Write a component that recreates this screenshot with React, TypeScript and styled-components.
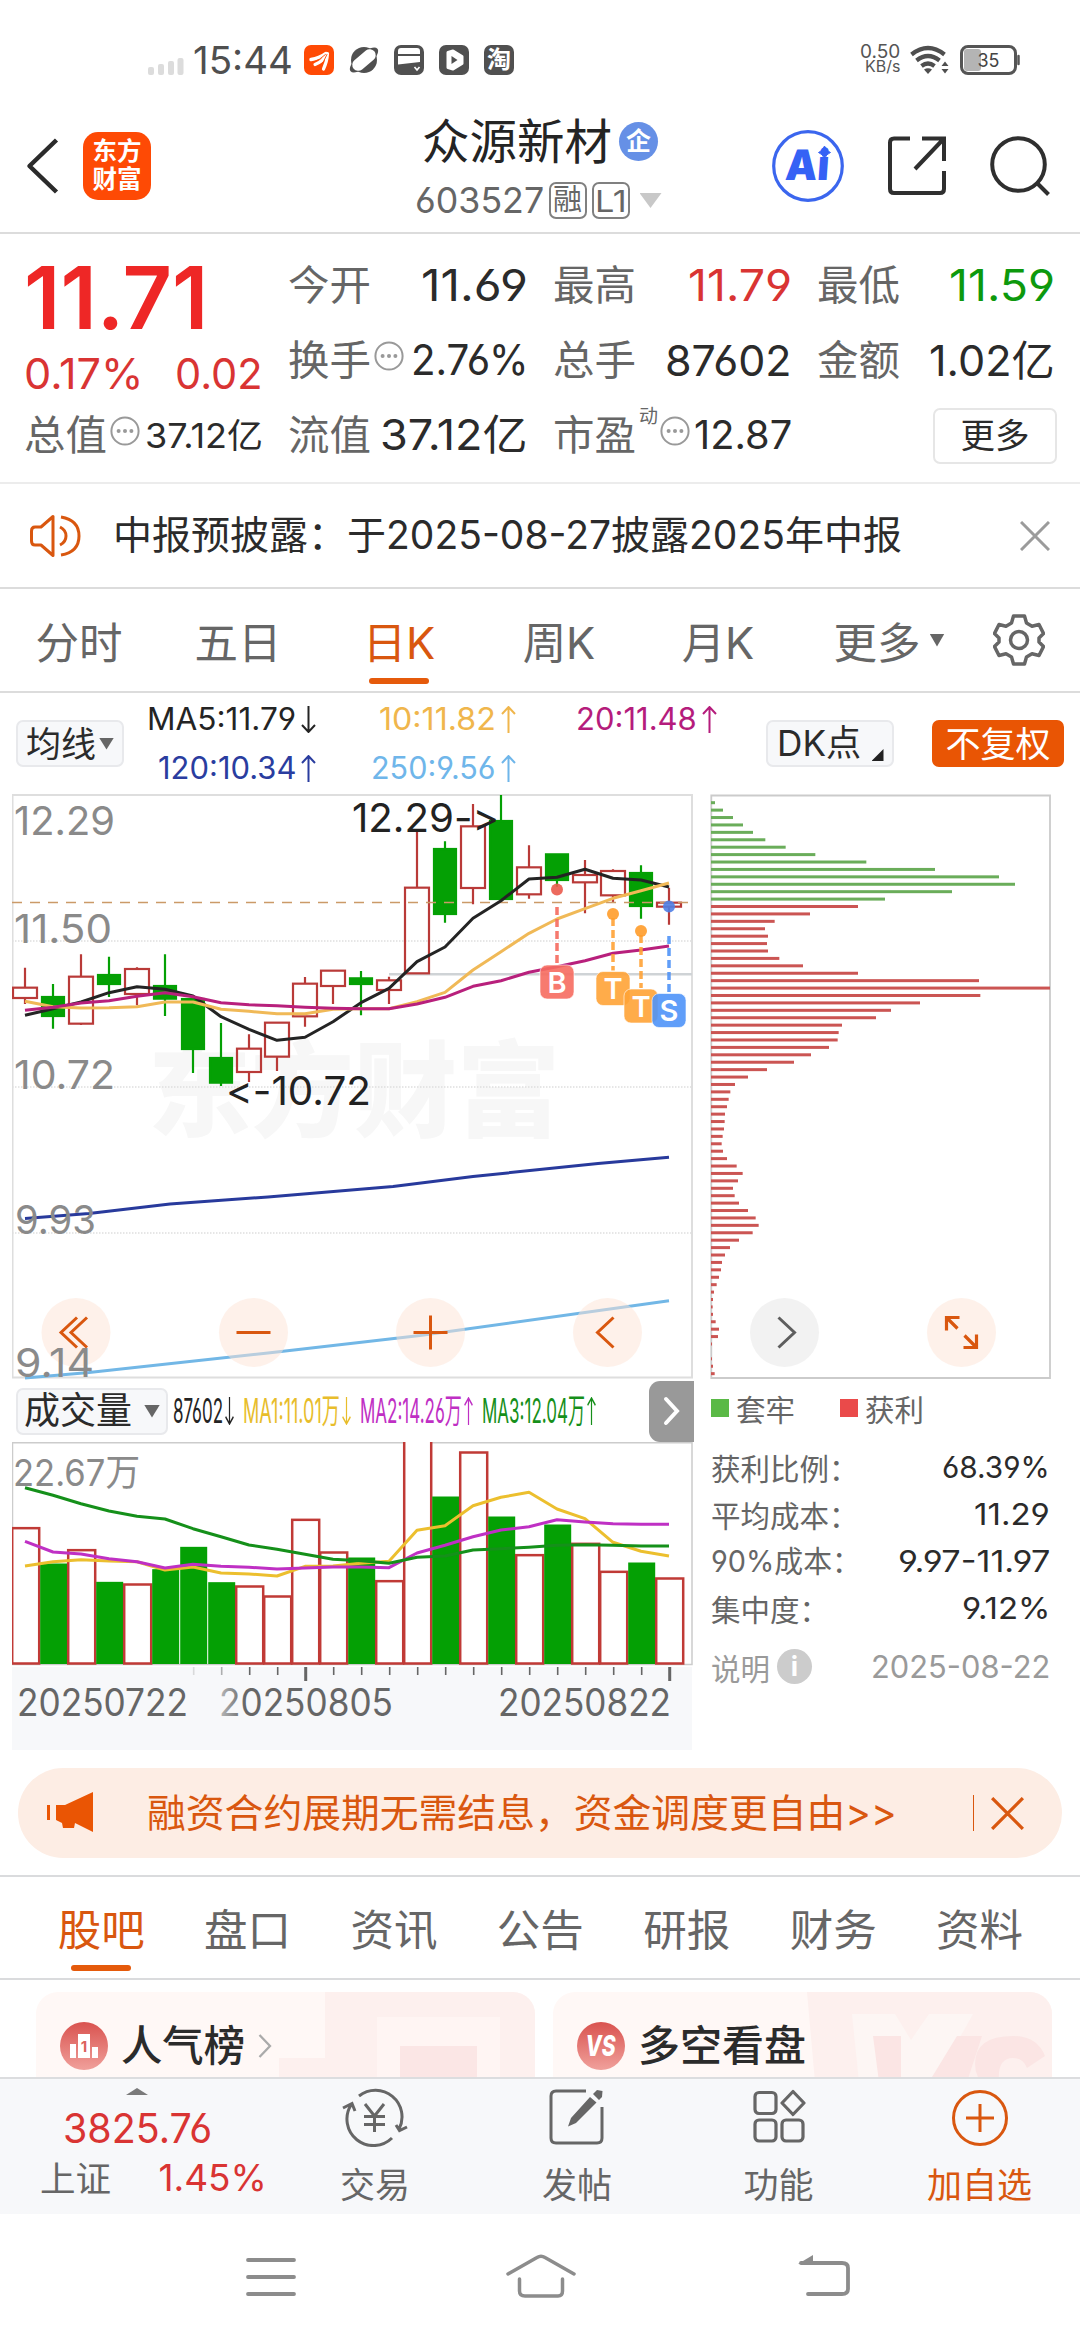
import React, { useLayoutEffect, useRef, useState } from 'react';
import styled, { createGlobalStyle } from 'styled-components';

const ORANGE = '#d9570f';
const RED = '#d93433';
const INK = '#2b2b2b';
const GRAY = '#666666';
const FONT = `'Inter', 'Noto Sans CJK SC', sans-serif`;

const Global = createGlobalStyle`
  * { box-sizing: border-box; }
  body { margin: 0; background: #fff; font-family: ${FONT}; color: ${INK}; }
  svg { display: block; flex: none; }
  svg text { font-family: ${FONT}; }
`;

/* ---------- text fitted to a fixed width ---------- */
const FitBox = styled.span<{ $w: number; $size: number; $color?: string; $weight?: number }>`
  display: inline-block;
  flex: none;
  width: ${p => p.$w}px;
  font-size: ${p => p.$size}px;
  line-height: 1.2;
  font-weight: ${p => p.$weight ?? 400};
  color: ${p => p.$color ?? 'inherit'};
  font-feature-settings: 'cv03', 'cv04';
`;
const FitInner = styled.span`
  display: inline-block;
  white-space: pre;
  transform-origin: 0 50%;
`;
type FitProps = { w: number; size: number; color?: string; weight?: number; children: React.ReactNode };
function Fit({ w, size, color, weight, children }: FitProps) {
  const ref = useRef<HTMLSpanElement>(null);
  const [scale, setScale] = useState(1);
  useLayoutEffect(() => {
    if (ref.current && ref.current.offsetWidth) setScale(w / ref.current.offsetWidth);
  }, [w, size, children]);
  return (
    <FitBox $w={w} $size={size} $color={color} $weight={weight}>
      <FitInner ref={ref} style={{ transform: `scaleX(${scale})` }}>{children}</FitInner>
    </FitBox>
  );
}

const Page = styled.div`
  width: 1080px;
  height: 2340px;
  display: flex;
  flex-direction: column;
  overflow: hidden;
  background: #fff;
`;

/* ---------- status bar ---------- */
const StatusBar = styled.div`
  height: 90px;
  flex: none;
  padding: 30px 60px 0 148px;
  display: flex;
  justify-content: space-between;
`;
const StatusGroup = styled.div<{ $gap: number }>`
  height: 60px;
  display: flex;
  align-items: center;
  gap: ${p => p.$gap}px;
`;
const Clock = styled.div`
  margin: 0 -4px 0 -8px;
  color: #4f4f4f;
`;
const AppTile = styled.div<{ $bg: string }>`
  width: 30px;
  height: 30px;
  border-radius: 7px;
  background: ${p => p.$bg};
  color: #fff;
  font-size: 24px;
  font-weight: 700;
  line-height: 30px;
  display: flex;
  align-items: center;
  justify-content: center;
`;
const Speed = styled.div`
  display: flex;
  flex-direction: column;
  align-items: flex-end;
  line-height: 1;
  margin-right: 0;
`;
const SpeedLine = styled.div`
  height: 15px;
  display: flex;
  align-items: center;
`;

/* ---------- header ---------- */
const Header = styled.header`
  height: 144px;
  flex: none;
  display: grid;
  grid-template-columns: 1fr auto 1fr;
  padding: 0 30px 0 26px;
  border-bottom: 2px solid #dcdcdc;
`;
const HeaderSide = styled.div<{ $end?: boolean }>`
  display: flex;
  align-items: center;
  height: 152px;
  justify-content: ${p => (p.$end ? 'flex-end' : 'flex-start')};
  gap: ${p => (p.$end ? 43 : 24)}px;
`;
const Logo = styled.div`
  width: 68px;
  height: 68px;
  border-radius: 15px;
  background: #fe4a05;
  color: #fff;
  font-size: 24.5px;
  font-weight: 700;
  line-height: 28px;
  text-align: center;
  padding-top: 5px;
`;
const TitleBlock = styled.div`
  display: flex;
  flex-direction: column;
  align-items: center;
  padding-top: 22px;
`;
const TitleLine = styled.div`
  height: 59px;
  display: flex;
  align-items: center;
  gap: 7px;
  padding-left: 4px;
`;
const Seal = styled.div`
  width: 39px;
  height: 39px;
  border-radius: 50%;
  background: #6690e6;
  color: #fff;
  font-size: 25px;
  font-weight: 700;
  line-height: 38px;
  text-align: center;
`;
const CodeLine = styled.div`
  height: 59px;
  display: flex;
  align-items: center;
  gap: 5px;
  color: ${GRAY};
`;
const CodeTag = styled.div`
  width: 38px;
  height: 37px;
  border: 2px solid #808080;
  border-radius: 7px;
  display: flex;
  align-items: center;
  justify-content: center;
`;
const Caret = styled.i<{ $w: number; $h: number; $c: string; $up?: boolean; $ml?: number }>`
  width: ${p => p.$w}px;
  height: ${p => p.$h}px;
  margin-left: ${p => p.$ml ?? 0}px;
  flex: none;
  background: ${p => p.$c};
  clip-path: ${p => (p.$up ? 'polygon(50% 0, 100% 100%, 0 100%)' : 'polygon(0 0, 100% 0, 50% 100%)')};
`;

/* ---------- quote ---------- */
const Quote = styled.section`
  height: 250px;
  flex: none;
  display: grid;
  grid-template-columns: 239px 240px 239px 238px;
  column-gap: 25px;
  padding: 14px 0 0 24px;
  border-bottom: 2px solid #ececec;
`;
const QuoteCol = styled.div`
  display: flex;
  flex-direction: column;
`;
const Cell = styled.div<{ $h?: number; $end?: boolean }>`
  height: ${p => p.$h ?? 75}px;
  display: flex;
  align-items: center;
  justify-content: ${p => (p.$end ? 'flex-end' : 'space-between')};
`;
const Label = styled.span<{ $dim?: boolean }>`
  display: flex;
  align-items: center;
  gap: 3px;
  color: ${p => (p.$dim ? '#9a9a9a' : GRAY)};
`;
const DotsIcon = styled.svg`
  margin-bottom: 9px;
`;
const Sup = styled.span`
  font-size: 19px;
  color: ${GRAY};
  align-self: flex-start;
  margin: -10px -1px 0 0;
`;
const MoreButton = styled.button`
  width: 124px;
  height: 56px;
  margin-right: -2px;
  padding: 0;
  background: #fff;
  border: 2px solid #e6e6e6;
  border-radius: 7px;
  color: ${INK};
  font: 400 34.5px/48px ${FONT};
`;

/* ---------- notice ---------- */
const Notice = styled.section`
  height: 105px;
  flex: none;
  display: flex;
  align-items: center;
  padding: 0 30px;
  border-bottom: 2px solid #dcdcdc;
`;
const NoticeText = styled.div`
  flex: 1;
  padding-left: 31px;
`;

/* ---------- tabs ---------- */
const PeriodTabs = styled.nav`
  height: 104px;
  flex: none;
  display: grid;
  grid-template-columns: 158px 160px 162px 158px 160px 182px 78px;
  border-bottom: 2px solid #dcdcdc;
`;
const Tab = styled.div<{ $on?: boolean }>`
  position: relative;
  display: flex;
  align-items: center;
  justify-content: center;
  gap: 9px;
  font-size: 43.5px;
  white-space: nowrap;
  color: ${p => (p.$on ? ORANGE : GRAY)};
  &::after {
    content: '';
    display: ${p => (p.$on ? 'block' : 'none')};
    position: absolute;
    bottom: 7px;
    left: calc(50% - 30px);
    width: 60px;
    height: 6px;
    border-radius: 3px;
    background: #e55a0b;
  }
`;

/* ---------- indicator strip ---------- */
const Indicators = styled.div`
  height: 101px;
  flex: none;
  display: flex;
  align-items: center;
  padding: 0 16px;
`;
const ChipButton = styled.div<{ $w: number; $solid?: boolean; $push?: boolean }>`
  width: ${p => p.$w}px;
  height: 47px;
  flex: none;
  margin-left: ${p => (p.$push ? 'auto' : '0')};
  border-radius: 7px;
  border: 2px solid ${p => (p.$solid ? '#e95504' : '#e8e9ec')};
  background: ${p => (p.$solid ? '#e95504' : '#f7f8fa')};
  color: ${p => (p.$solid ? '#fff' : INK)};
  display: flex;
  align-items: center;
  justify-content: center;
  gap: 3px;
  font-size: 35px;
  line-height: 40px;
  white-space: nowrap;
`;
const MaGrid = styled.div`
  display: grid;
  grid-template-columns: 192px 200px 201px;
  grid-auto-rows: 49px;
  margin-right: 49px;
  padding-top: 1px;
`;
const MaItem = styled.div<{ $c: string }>`
  display: flex;
  align-items: center;
  justify-content: flex-end;
  gap: 5px;
  color: ${p => p.$c};
`;
const Corner = styled.i`
  width: 12px;
  height: 12px;
  background: #222;
  clip-path: polygon(100% 0, 100% 100%, 0 100%);
  align-self: flex-end;
  margin: 0 0 4px 8px;
`;

/* ---------- charts ---------- */
const ChartArea = styled.section`
  flex: none;
  height: 974px;
  display: grid;
  grid-template-columns: 682px 345px;
  column-gap: 16px;
  padding-left: 12px;
`;
const Column = styled.div`
  display: flex;
  flex-direction: column;
`;
const VolumeHead = styled.div`
  height: 62px;
  display: flex;
  align-items: center;
  padding-left: 4px;
`;
const VolumeLegend = styled.div`
  flex: 1;
  display: flex;
  align-items: center;
  padding-left: 5px;
`;
const VolItem = styled.div<{ $c: string; $gap: number }>`
  display: flex;
  align-items: center;
  gap: 2px;
  color: ${p => p.$c};
  margin-right: ${p => p.$gap}px;
`;
const Expand = styled.div`
  width: 45px;
  height: 61px;
  border-radius: 11px 0 0 11px;
  background: #999;
  display: flex;
  align-items: center;
  justify-content: center;
`;
const CostLegend = styled.div`
  height: 59px;
  padding-bottom: 3px;
  display: flex;
  align-items: center;
  font-size: 29.5px;
  color: ${GRAY};
`;
const Swatch = styled.i<{ $c: string; $ml?: number }>`
  width: 18px;
  height: 18px;
  background: ${p => p.$c};
  margin: 0 7px 0 ${p => p.$ml ?? 0}px;
`;
const CostRow = styled.div<{ $mt?: number; $dim?: boolean }>`
  height: 47px;
  margin-top: ${p => p.$mt ?? 0}px;
  width: 340px;
  padding-left: 1px;
  display: flex;
  align-items: center;
  justify-content: space-between;
  font-size: 29.5px;
  color: ${p => (p.$dim ? '#9a9a9a' : GRAY)};
`;
const InfoDot = styled.span`
  width: 35px;
  height: 35px;
  border-radius: 50%;
  background: #cccccc;
  color: #fff;
  font-size: 27px;
  font-weight: 700;
  line-height: 35px;
  text-align: center;
  margin-left: 4px;
`;

/* ---------- banner ---------- */
const Banner = styled.section`
  flex: none;
  height: 90px;
  margin: 0 18px 17px;
  border-radius: 45px;
  background: #fdede4;
  display: flex;
  align-items: center;
  padding: 0 38px 0 28px;
  color: ${ORANGE};
`;
const BannerText = styled.div`
  flex: 1;
  padding-left: 53px;
`;
const Divider = styled.i`
  width: 1.5px;
  height: 36px;
  background: ${ORANGE};
  margin-right: 17px;
`;

const SectionTabs = styled.nav`
  height: 105px;
  flex: none;
  display: grid;
  grid-template-columns: repeat(7, 146.4px);
  padding-left: 28px;
  border-top: 2px solid #dadbdd;
  border-bottom: 2px solid #dadbdd;
`;
const Cards = styled.section`
  height: 97px;
  flex: none;
  padding: 12px 28px 0 36px;
  display: grid;
  grid-template-columns: 499px 499px;
  column-gap: 18px;
  overflow: hidden;
`;
const Card = styled.div`
  position: relative;
  height: 160px;
  border-radius: 22px;
  overflow: hidden;
  background: #fff8f6;
`;
const CardArt = styled.svg`
  position: absolute;
  top: 0;
  right: 0;
`;
const CardTitle = styled.div`
  position: relative;
  height: 108px;
  display: flex;
  align-items: center;
  gap: 13px;
  padding-left: 24px;
  font-size: 41.5px;
  font-weight: 500;
`;

/* ---------- bottom ---------- */
const BottomBar = styled.footer`
  height: 137px;
  flex: none;
  display: grid;
  grid-template-columns: 274px 202px 202px 201px 201px;
  background: #f7f8fa;
  border-top: 2px solid #dcdddf;
`;
const IndexBox = styled.div`
  display: flex;
  flex-direction: column;
  align-items: center;
  padding-top: 9px;
`;
const IndexValue = styled.div`
  height: 49px;
  margin-top: 9px;
  display: flex;
  align-items: center;
`;
const IndexLine = styled.div`
  height: 49px;
  display: flex;
  align-items: center;
  justify-content: space-between;
  width: 227px;
  margin-left: 32px;
  padding-top: 2px;
  color: ${GRAY};
`;
const Action = styled.div<{ $on?: boolean }>`
  display: flex;
  flex-direction: column;
  align-items: center;
  padding-top: 8px;
  gap: 12px;
  font-size: 35px;
  line-height: 52px;
  color: ${p => (p.$on ? ORANGE : GRAY)};
`;
const SystemNav = styled.div`
  flex: 1;
  display: grid;
  grid-template-columns: 276px 264px 302px;
  padding-left: 133px;
`;
const NavCell = styled.div`
  display: flex;
  justify-content: center;
  padding-top: 38px;
`;

/* ---------- small drawings ---------- */
const Dots = () => (
  <DotsIcon width="30" height="30" viewBox="0 0 30 30">
    <circle cx="15" cy="15" r="13.6" fill="none" stroke="#999" strokeWidth="2" />
    <g fill="#999"><circle cx="8.6" cy="15" r="2" /><circle cx="15" cy="15" r="2" /><circle cx="21.4" cy="15" r="2" /></g>
  </DotsIcon>
);
const Arrow = ({ down, w = 15, h = 27 }: { down?: boolean; w?: number; h?: number }) => (
  <svg width={w} height={h} viewBox="0 0 15 27" preserveAspectRatio="none">
    <path d={down ? 'M7.5 0V26M1 19l6.500 7 6.500-7' : 'M7.500 27V1M1 8l6.500-7L14 8'} fill="none" stroke="currentColor" strokeWidth="2" />
  </svg>
);
const Cross = ({ s, c, sw }: { s: number; c: string; sw: number }) => (
  <svg width={s} height={s} viewBox="0 0 30 30">
    <path d="M1 1L29 29M29 1L1 29" stroke={c} strokeWidth={sw} />
  </svg>
);

/* ---------- chart data ---------- */
const X = (i: number) => 25 + 28 * i;
const K = (v: number) => 780 + v / 3;
const V = (v: number) => 1420 + v / 3;

// up?, high, top, bottom, low
const candles: [number, number, number, number, number][] = [
  [1, 563, 623, 654, 672], [0, 612, 651, 708, 746], [1, 523, 590, 731, 735], [0, 530, 585, 612, 651],
  [1, 562, 567, 642, 676], [0, 523, 618, 656, 708], [0, 645, 657, 807, 879], [0, 729, 834, 908, 918],
  [1, 763, 806, 876, 906], [1, 728, 728, 830, 873], [1, 591, 611, 709, 740], [1, 572, 572, 618, 672],
  [0, 573, 595, 612, 706], [1, 590, 601, 630, 672], [1, 155, 323, 580, 580], [0, 184, 207, 402, 428],
  [1, 72, 139, 324, 373], [0, 45, 123, 357, 357], [1, 196, 262, 343, 356], [0, 222, 223, 300, 320],
  [1, 240, 285, 307, 400], [1, 268, 273, 346, 366], [0, 256, 279, 378, 416], [1, 323, 368, 380, 434],
];
const ma5 = [706, 686, 666, 638, 620, 628, 648, 710, 748, 781, 772, 725, 668, 625, 545, 501, 415, 362, 297, 292, 268, 295, 300, 321];
const ma10 = [664, 680, 684, 683, 680, 666, 666, 688, 694, 701, 701, 688, 686, 686, 665, 637, 570, 515, 460, 417, 386, 355, 332, 309];
const ma20 = [691, 682, 669, 662, 649, 638, 650, 668, 674, 677, 682, 685, 686, 686, 672, 652, 619, 602, 577, 560, 542, 520, 510, 498];
const volumes: [number, number][] = [
  [1, 323], [0, 432], [1, 389], [0, 487], [1, 492], [0, 449], [0, 382], [0, 488], [1, 498], [1, 528], [1, 298], [1, 396],
  [0, 414], [1, 482], [1, 60], [0, 231], [1, 96], [0, 291], [1, 404], [0, 315], [1, 370], [1, 454], [0, 429], [1, 474],
];
const vma1 = [438, 425, 419, 423, 425, 450, 441, 459, 462, 468, 439, 438, 430, 424, 331, 317, 257, 232, 217, 267, 296, 367, 394, 408];
const vma2 = [364, 396, 402, 416, 425, 444, 433, 439, 442, 447, 444, 441, 441, 443, 399, 376, 350, 330, 320, 299, 306, 311, 313, 313];
const vma3 = [203, 226, 251, 273, 289, 297, 326, 350, 375, 388, 403, 418, 422, 430, 412, 408, 390, 386, 382, 376, 374, 376, 378, 378];
const costs = [
  12, 36, 66, 96, 126, 163, 224, 313, 466, 672, 864, 912, 723, 522, 441, 297, 191, 162, 171, 168, 171, 205, 276, 441, 804, 1017,
  808, 627, 540, 495, 393, 383, 380, 354, 300, 249, 168, 111, 72, 58, 53, 48, 42, 41, 39, 35, 32, 36, 48, 77, 95, 81, 66, 71, 84,
  111, 134, 143, 125, 84, 57, 42, 33, 30, 24, 17, 9, 6, 5, 6, 14, 24, 21, 3, 0, 3, 6, 11,
];
const line = (vals: number[], f: (v: number) => number) => vals.map((v, i) => `${X(i)},${f(v).toFixed(1)}`).join(' ');

const Round = ({ x, gray, children }: { x: number; gray?: boolean; children: React.ReactNode }) => (
  <g>
    <circle cx={x} cy="1332.500" r="34.500" fill={gray ? '#e9e9e9' : '#fde3d6'} fillOpacity={gray ? 0.6 : 0.5} />
    <g transform={`translate(${x} 1332.500)`} fill="none" stroke={gray ? '#5e5e5e' : ORANGE} strokeWidth="3">{children}</g>
  </g>
);
const Marker = ({ x, y, dot, from, c, dc, t }: { x: number; y: number; dot: number; from: number; c: string; dc: string; t: string }) => (
  <g>
    <path d={`M${x} ${from}V${y - 18}`} stroke={c} strokeWidth="3.500" strokeDasharray="8 4" opacity="0.9" />
    <circle cx={x} cy={dot} r="6" fill={dc} fillOpacity="0.9" />
    <rect x={x - 17} y={y - 17} width="34" height="34" rx="7" fill={c} fillOpacity="0.9" stroke="#fff" strokeOpacity="0.6" />
    <text x={x} y={y + 10.5} fontSize="29" fontWeight="600" fill="#fff" textAnchor="middle">{t}</text>
  </g>
);

function KChart() {
  return (
    <svg width="682" height="586" viewBox="12 794 682 586">
      <g fontSize="104" fontWeight="900" fill="#f7f7f7">
        <text x="148" y="1129" textLength="412" lengthAdjust="spacingAndGlyphs">东方财富</text>
      </g>
      <g stroke="#dedede" strokeWidth="1.500" strokeDasharray="1.500 1.500">
        <path d="M12 941H692M12 1087H692M12 1233H692" />
      </g>
      <path d="M12.500 795H692V1377.500H12.500Z" fill="none" stroke="#dedede" strokeWidth="2" />
      <path d="M389 974.300H692" stroke="#cfd3d6" strokeWidth="2.500" />
      {candles.map(([up, h, t, b, l], i) => (
        <g key={i} stroke={up ? '#b93a38' : '#04a004'} strokeWidth="2.2">
          <path d={`M${X(i)} ${K(h)}V${K(t)}M${X(i)} ${K(b)}V${K(l)}`} />
          <rect x={X(i) - (up ? 12 : 11)} y={K(t)} width={up ? 24 : 22} height={K(b) - K(t)} fill={up ? 'none' : '#04a004'} />
        </g>
      ))}
      <path d="M12 902.500H689" stroke="#cb9a68" strokeWidth="1.300" strokeDasharray="10 8" />
      <g fill="none" strokeWidth="3" strokeLinejoin="round">
        <polyline points={line(ma5, K)} stroke="#242424" />
        <polyline points={line(ma10, K)} stroke="#f0b957" />
        <polyline points={line(ma20, K)} stroke="#b8207c" />
        <path d="M25 1218.500L89 1213.500L170 1204L268 1197L393 1186.500L473 1176.500L598 1163.500L669 1157.300" stroke="#283a9c" />
        <path d="M25 1378L89 1372.500L268 1353L420 1335.500L669 1300.700" stroke="#72b7e6" />
      </g>
      <Round x={76}><path d="M1-15L-15 0L1 15M11-15L-5 0L11 15" /></Round>
      <Round x={253.5}><path d="M-17 0H17" /></Round>
      <Round x={430.5}><path d="M-17 0H17M0-17V17" /></Round>
      <Round x={607.5}><path d="M6-15L-10 0L6 15" /></Round>
      <g fontSize="39" fill="#8a8a8a">
        <text x="14" y="834.500" textLength="101" lengthAdjust="spacingAndGlyphs">12.29</text>
        <text x="14" y="942.500" textLength="98" lengthAdjust="spacingAndGlyphs">11.50</text>
        <text x="14" y="1088.500" textLength="101" lengthAdjust="spacingAndGlyphs">10.72</text>
        <text x="15" y="1234" textLength="81" lengthAdjust="spacingAndGlyphs">9.93</text>
        <text x="15" y="1376.500" textLength="79" lengthAdjust="spacingAndGlyphs">9.14</text>
      </g>
      <g fontSize="39" fill="#222" style={{ fontVariantLigatures: 'none', fontFeatureSettings: '"calt" 0' }}>
        <text x="352" y="832" textLength="147" lengthAdjust="spacingAndGlyphs">12.29-&gt;</text>
        <text x="226" y="1105" textLength="145" lengthAdjust="spacingAndGlyphs">&lt;-10.72</text>
      </g>
      <Marker x={557} y={982} dot={889.5} from={907} c="#f66b5f" dc="#ea5a4c" t="B" />
      <Marker x={613} y={988.5} dot={914} from={918} c="#ffa336" dc="#ff9c2a" t="T" />
      <Marker x={641} y={1006} dot={931} from={935} c="#ffa336" dc="#ff9c2a" t="T" />
      <Marker x={669} y={1010.5} dot={906.5} from={936} c="#4f93f8" dc="#4f7fe6" t="S" />
    </svg>
  );
}

function VolumeChart() {
  return (
    <svg width="682" height="308" viewBox="12 1442 682 308">
      <rect x="12" y="1667" width="680" height="83" fill="#f7f8fa" />
      <path d="M12.500 1442.700H692V1664.500H12.500Z" fill="#fff" stroke="#cccccc" strokeWidth="1.500" />
      {volumes.map(([up, t], i) => {
        const top = Math.max(V(t), 1436);
        return up ? (
          <rect key={i} x={X(i) - 12.8} y={top + 0.5} width="27" height={1663 - top} fill="#fff" stroke="#c03a36" strokeWidth="2.500" />
        ) : (
          <rect key={i} x={X(i) - 12.8} y={top - 0.5} width="27" height={1664.5 - top} fill="#04a004" />
        );
      })}
      <g fill="none" strokeWidth="3" strokeLinejoin="round">
        <polyline points={line(vma1, V)} stroke="#ecbf2e" />
        <polyline points={line(vma2, V)} stroke="#bf30c4" />
        <polyline points={line(vma3, V)} stroke="#15901a" />
      </g>
      <text x="13" y="1486" fontSize="37" fill="#8a8a8a" textLength="127" lengthAdjust="spacingAndGlyphs">22.67万</text>
      {Array.from({ length: 18 }, (_, k) => k + 6).map(i => {
        const major = i === 10 || i === 23;
        return <path key={i} d={`M${X(i) + 0.7} 1667V${major ? 1681 : 1675}`} stroke="#666" strokeWidth={major ? 3 : 1.6} opacity={i === 6 ? 0.2 : i === 7 ? 0.5 : 1} />;
      })}
      <defs>
        <linearGradient id="fade" gradientUnits="userSpaceOnUse" x1="218" y1="0" x2="245" y2="0">
          <stop offset="0" stopColor="#666" stopOpacity="0.4" /><stop offset="1" stopColor="#666" />
        </linearGradient>
      </defs>
      <g fontSize="37.500" fill="#666">
        <text x="17" y="1715.500" textLength="171" lengthAdjust="spacingAndGlyphs">20250722</text>
        <text x="219" y="1715.500" textLength="174" lengthAdjust="spacingAndGlyphs" fill="url(#fade)">20250805</text>
        <text x="498" y="1715.500" textLength="173" lengthAdjust="spacingAndGlyphs">20250822</text>
      </g>
    </svg>
  );
}

function CostChart() {
  return (
    <svg width="345" height="586" viewBox="710 794 345 586">
      <path d="M711.300 795.500H1050V1378H711.300Z" fill="none" stroke="#cbcbcb" strokeWidth="1.800" />
      {costs.map((c, i) => (
        <rect key={i} x="711" y={801.2 + i * 7.415} width={c / 3} height="3" fill={i < 14 ? '#6aad5a' : '#cb5553'} />
      ))}
      <Round x={784.5} gray><path d="M-6-15L10 0L-6 15" /></Round>
      <Round x={961.5}>
        <path d="M-2-15H-15V-2M-14-14L-4-4M2 15H15V2M14 14L3 3" strokeWidth="3.200" />
      </Round>
    </svg>
  );
}

const SpeakerIcon = () => (
  <svg width="52" height="44" viewBox="0 0 52 44" fill="none" stroke={ORANGE} strokeWidth="3">
    <path d="M23 2.500V41.500L11 31H5Q1.500 31 1.500 27V17Q1.500 13 5 13H11Z" strokeLinejoin="round" />
    <path d="M30 13Q36 16 36 22T30 31M31 3Q49 6 49 22T31 41" />
  </svg>
);
const GearIcon = () => (
  <svg width="52" height="52" viewBox="0 0 52 52" fill="none" stroke={GRAY} strokeWidth="3.500">
    <path d="M20.500 2H31.500L33.500 9L39 12.200L46 10.500L50.500 19.500L46 24V28L50.500 32.500L46 41.500L39 39.800L33.500 43L31.500 50H20.500L18.500 43L13 39.800L6 41.500L1.500 32.500L6 28V24L1.500 19.500L6 10.500L13 12.200L18.500 9Z" strokeLinejoin="round" />
    <circle cx="26" cy="26" r="8.500" />
  </svg>
);

const BLACK = '#242424';

export default function App() {
  return (
    <>
      <Global />
      <Page>
        <StatusBar>
          <StatusGroup $gap={15}>
            <svg width="38" height="30" viewBox="0 0 38 30" fill="#dcdcdc">
              <rect x="0" y="22" width="6" height="8" rx="2" /><rect x="10" y="19" width="6" height="11" rx="2" />
              <rect x="20" y="16" width="6" height="14" rx="2" /><rect x="29.500" y="13" width="6" height="17" rx="2" />
            </svg>
            <Clock><Fit w={100} size={38.5}>15:44</Fit></Clock>
            <AppTile $bg="#ff4a05">
              <svg width="30" height="30" viewBox="0 0 30 30" fill="none" stroke="#fff" strokeLinecap="round">
                <path d="M7 14.500Q15 13.500 22 8.500" strokeWidth="3.400" />
                <path d="M11 19.500Q19 16.500 23 9" strokeWidth="3.200" />
                <path d="M19.500 24Q23 17 23.500 8.500" strokeWidth="3.200" />
                <path d="M9 17Q16 15 21.500 9.500M15 21.500Q20.500 17 23 9.500" stroke="#ff4a05" strokeWidth="0.900" />
              </svg>
            </AppTile>
            <svg width="30" height="30" viewBox="0 0 30 30">
              <circle cx="15" cy="15" r="13" fill="#505050" />
              <ellipse cx="15" cy="15" rx="17.500" ry="7" transform="rotate(-40 15 15)" fill="#505050" />
              <rect x="1.500" y="9" width="27" height="12" rx="6" transform="rotate(-40 15 15)" fill="#fff" />
            </svg>
            <AppTile $bg="#505050">
              <svg width="30" height="30" viewBox="0 0 30 30" fill="#fff">
                <path d="M4 6Q4 3 7 3H23Q26 3 26 6V9H4ZM4 11H26V17L4 19.500Z" />
                <path d="M20.500 22L23 25L25.500 22" fill="none" stroke="#fff" strokeWidth="1.600" />
              </svg>
            </AppTile>
            <AppTile $bg="#505050">
              <svg width="30" height="30" viewBox="0 0 30 30">
                <path d="M9 7.500L14 6L23 11.500V18.500L14 24L9 22.500Z" fill="#fff" stroke="#fff" strokeWidth="3" strokeLinejoin="round" />
                <path d="M12.500 11V19L18.500 15Z" fill="#505050" />
              </svg>
            </AppTile>
            <AppTile $bg="#505050">淘</AppTile>
          </StatusGroup>
          <StatusGroup $gap={10}>
            <Speed>
              <SpeedLine><Fit w={40} size={19} color="#555">0.50</Fit></SpeedLine>
              <SpeedLine><Fit w={35} size={15.5} color="#555">KB/s</Fit></SpeedLine>
            </Speed>
            <svg width="40" height="30" viewBox="0 0 40 30" fill="none" stroke="#4f4f4f" strokeWidth="4.200">
              <path d="M1.500 9.500Q18 -3.500 34.500 9.500M6.500 15.500Q18 6.500 29.500 15.500M11.500 21Q18 16 24.500 21" />
              <path d="M14 24.500Q18 22 22 24.500L18 29Z" fill="#4f4f4f" stroke="none" />
              <path d="M31.500 21L35 16.500L38.500 21ZM31.500 24L35 28.500L38.500 24Z" fill="#4f4f4f" stroke="none" />
            </svg>
            <svg width="60" height="30" viewBox="0 0 60 30">
              <rect x="1.500" y="1.500" width="54" height="27" rx="6.500" fill="#fff" stroke="#555" strokeWidth="3" />
              <rect x="4" y="4" width="17" height="22" rx="3" fill="#b4b4b4" />
              <path d="M58.500 11V19" stroke="#555" strokeWidth="2.500" strokeLinecap="round" />
              <text x="28.500" y="21.500" fontSize="18.500" fill="#444" textAnchor="middle" textLength="22" lengthAdjust="spacingAndGlyphs">35</text>
            </svg>
          </StatusGroup>
        </StatusBar>

        <Header>
          <HeaderSide>
            <svg width="33" height="56" viewBox="0 0 33 56" fill="none" stroke="#2b2b2b" strokeWidth="4.500">
              <path d="M30.500 2L3.500 28L30.500 54" strokeLinejoin="round" />
            </svg>
            <Logo>东方<br />财富</Logo>
          </HeaderSide>
          <TitleBlock>
            <TitleLine>
              <Fit w={190} size={48} color={BLACK}>众源新材</Fit>
              <Seal>企</Seal>
            </TitleLine>
            <CodeLine>
              <Fit w={129} size={36}>603527</Fit>
              <CodeTag><Fit w={29} size={29}>融</Fit></CodeTag>
              <CodeTag><Fit w={32} size={30}>L1</Fit></CodeTag>
              <Caret $w={22} $h={15} $c="#c8c8c8" $ml={5} />
            </CodeLine>
          </TitleBlock>
          <HeaderSide $end>
            <svg width="72" height="74" viewBox="0 0 72 74">
              <circle cx="36" cy="37" r="34.300" fill="none" stroke="#3b66ee" strokeWidth="3.200" />
              <text x="13" y="51" fontSize="42" fontWeight="900" fill="#3562f5" textLength="44" lengthAdjust="spacingAndGlyphs" transform="skewX(-4) translate(3 0)">Ai</text>
              <path d="M52.500 17Q54 22 58.500 23.500Q54 25 52.500 30Q51 25 46.500 23.500Q51 22 52.500 17Z" fill="#3562f5" stroke="#3562f5" strokeWidth="1" />
            </svg>
            <svg width="60" height="60" viewBox="0 0 60 60" fill="none" stroke="#2f2f2f" strokeWidth="4">
              <path d="M23 2.500H7Q3 2.500 3 6.500V53Q3 57 7 57H53Q57 57 57 53V35" />
              <path d="M35 2.500H57V25M57 2.500L28 33" />
            </svg>
            <svg width="60" height="60" viewBox="0 0 60 60" fill="none" stroke="#2f2f2f" strokeWidth="4">
              <circle cx="28.500" cy="28.500" r="26.300" /><path d="M47 47L58.500 58.500" />
            </svg>
          </HeaderSide>
        </Header>

        <Quote>
          <QuoteCol>
            <Cell $h={100}><Fit w={184} size={87} weight={600} color="#ee2726">11.71</Fit></Cell>
            <Cell $h={50}><Fit w={119} size={42.5} color={RED}>0.17%</Fit><Fit w={88} size={42.5} color={RED}>0.02</Fit></Cell>
            <Cell>
              <Label><Fit w={83} size={41}>总值</Fit><Dots /></Label>
              <Fit w={118} size={34.5}>37.12亿</Fit>
            </Cell>
          </QuoteCol>
          <QuoteCol>
            <Cell><Label><Fit w={83} size={41}>今开</Fit></Label><Fit w={107} size={43.5}>11.69</Fit></Cell>
            <Cell><Label><Fit w={83} size={41}>换手</Fit><Dots /></Label><Fit w={117} size={42}>2.76%</Fit></Cell>
            <Cell><Label><Fit w={83} size={41}>流值</Fit></Label><Fit w={148} size={42}>37.12亿</Fit></Cell>
          </QuoteCol>
          <QuoteCol>
            <Cell><Label><Fit w={83} size={41}>最高</Fit></Label><Fit w={104} size={43.5} color={RED}>11.79</Fit></Cell>
            <Cell><Label><Fit w={83} size={41}>总手</Fit></Label><Fit w={127} size={43}>87602</Fit></Cell>
            <Cell>
              <Label><Fit w={83} size={41}>市盈</Fit><Sup>动</Sup><Dots /></Label>
              <Fit w={98} size={39}>12.87</Fit>
            </Cell>
          </QuoteCol>
          <QuoteCol>
            <Cell><Label><Fit w={83} size={41}>最低</Fit></Label><Fit w={106} size={43.5} color="#0d990d">11.59</Fit></Cell>
            <Cell><Label><Fit w={83} size={41}>金额</Fit></Label><Fit w={126} size={42.5}>1.02亿</Fit></Cell>
            <Cell $end><MoreButton>更多</MoreButton></Cell>
          </QuoteCol>
        </Quote>

        <Notice>
          <SpeakerIcon />
          <NoticeText><Fit w={789} size={39}>中报预披露：于2025-08-27披露2025年中报</Fit></NoticeText>
          <Cross s={30} c="#9b9b9b" sw={3} />
        </Notice>

        <PeriodTabs>
          <Tab>分时</Tab>
          <Tab>五日</Tab>
          <Tab $on>日K</Tab>
          <Tab>周K</Tab>
          <Tab>月K</Tab>
          <Tab>更多<Caret $w={15} $h={13} $c="#666" /></Tab>
          <Tab><GearIcon /></Tab>
        </PeriodTabs>

        <Indicators>
          <ChipButton $w={108}>均线<Caret $w={15} $h={12} $c="#666" /></ChipButton>
          <MaGrid>
            <MaItem $c={BLACK}><Fit w={149} size={30.5}>MA5:11.79</Fit><Arrow down /></MaItem>
            <MaItem $c="#f0b64c"><Fit w={117} size={30.5}>10:11.82</Fit><Arrow /></MaItem>
            <MaItem $c="#b51c7c"><Fit w={121} size={30.5}>20:11.48</Fit><Arrow /></MaItem>
            <MaItem $c="#2a3d9f"><Fit w={138} size={30.5}>120:10.34</Fit><Arrow /></MaItem>
            <MaItem $c="#6fb6ea"><Fit w={125} size={30.5}>250:9.56</Fit><Arrow /></MaItem>
          </MaGrid>
          <ChipButton $w={128}><Fit w={84} size={36}>DK点</Fit><Corner /></ChipButton>
          <ChipButton $w={132} $solid $push>不复权</ChipButton>
        </Indicators>

        <ChartArea>
          <Column>
            <KChart />
            <VolumeHead>
              <ChipButton $w={152}><Fit w={108} size={37}>成交量</Fit><Caret $w={16} $h={13} $c="#666" $ml={9} /></ChipButton>
              <VolumeLegend>
                <VolItem $c={BLACK} $gap={9}><Fit w={50} size={34}>87602</Fit><Arrow down w={9} h={28} /></VolItem>
                <VolItem $c="#e8bd2b" $gap={9}><Fit w={97} size={34}>MA1:11.01万</Fit><Arrow down w={9} h={28} /></VolItem>
                <VolItem $c="#bf2fc4" $gap={9}><Fit w={102} size={34}>MA2:14.26万</Fit><Arrow w={9} h={28} /></VolItem>
                <VolItem $c="#168f1a" $gap={0}><Fit w={103} size={34}>MA3:12.04万</Fit><Arrow w={9} h={28} /></VolItem>
              </VolumeLegend>
              <Expand>
                <svg width="18" height="30" viewBox="0 0 18 30"><path d="M3 3L14 15L3 27" fill="none" stroke="#fff" strokeWidth="4" strokeLinecap="round" /></svg>
              </Expand>
            </VolumeHead>
            <VolumeChart />
          </Column>
          <Column>
            <CostChart />
            <CostLegend>
              <Swatch $c="#5ab946" $ml={1} />套牢
              <Swatch $c="#ea4a4a" $ml={45} />获利
            </CostLegend>
            <CostRow $mt={4}>获利比例：<Fit w={108} size={30} color={INK}>68.39%</Fit></CostRow>
            <CostRow>平均成本：<Fit w={76} size={30} color={INK}>11.29</Fit></CostRow>
            <CostRow><Fit w={150} size={30}>90%成本：</Fit><Fit w={152} size={30} color={INK}>9.97-11.97</Fit></CostRow>
            <CostRow>集中度：<Fit w={88} size={30} color={INK}>9.12%</Fit></CostRow>
            <CostRow $mt={12} $dim>
              <Label $dim>说明<InfoDot>i</InfoDot></Label>
              <Fit w={179} size={31}>2025-08-22</Fit>
            </CostRow>
          </Column>
        </ChartArea>

        <Banner>
          <svg width="48" height="42" viewBox="0 0 48 42" fill="#ea5504">
            <path d="M1 13H4V28H1ZM10 13H19L47 0V40L29 31L28 36H17L16 31L10 28Z" />
          </svg>
          <BannerText><Fit w={750} size={39}>融资合约展期无需结息，资金调度更自由&gt;&gt;</Fit></BannerText>
          <Divider />
          <Cross s={33} c="#d9570f" sw={3} />
        </Banner>

        <SectionTabs>
          {['股吧', '盘口', '资讯', '公告', '研报', '财务', '资料'].map((t, i) => (
            <Tab key={t} $on={i === 0}>{t}</Tab>
          ))}
        </SectionTabs>

        <Cards>
          <Card>
            <CardArt width="270" height="90" viewBox="0 0 270 90">
              <path d="M60 0H270V90H14V66H60Z" fill="#fdf0ee" />
              <path d="M112 25H235V90H112Z" fill="#fff5f3" />
              <path d="M135 54H212V90H135Z" fill="#fbe6e5" />
            </CardArt>
            <CardTitle>
              <svg width="48" height="48" viewBox="0 0 48 48">
                <defs><linearGradient id="badge" x1="0" y1="0" x2="0" y2="1"><stop offset="0" stopColor="#d9534f" /><stop offset="1" stopColor="#f0a09b" /></linearGradient></defs>
                <circle cx="24" cy="24" r="24" fill="url(#badge)" />
                <path d="M10 22H16V36H10ZM18 12H30V36H18ZM32 25H38V36H32Z" fill="#fff" />
                <text x="24" y="30" fontSize="15" fontWeight="700" fill="#dc625d" textAnchor="middle">1</text>
              </svg>
              <Fit w={124} size={42} weight={500}>人气榜</Fit>
              <svg width="14" height="24" viewBox="0 0 14 24"><path d="M1.500 1L12 12L1.500 23" fill="none" stroke="#aaa" strokeWidth="2.300" /></svg>
            </CardTitle>
          </Card>
          <Card>
            <CardArt width="245" height="90" viewBox="0 0 245 90">
              <path d="M0 0H245V90H8Z" fill="#fdf0ee" />
              <path d="M45 22H88L104 48L122 22H166L128 90H52Z" fill="#fdf6f4" />
              <path d="M66 44H94V90H72ZM150 44H175L160 90H122Z" fill="#fbe5e4" />
              <path d="M238 64Q230 44 206 44Q168 44 168 72Q168 82 174 90H192Q190 66 206 66Q216 66 220 76Z" fill="#fbe5e4" />
            </CardArt>
            <CardTitle>
              <svg width="48" height="48" viewBox="0 0 48 48">
                <circle cx="24" cy="24" r="24" fill="url(#badge)" />
                <text x="8.500" y="34" fontSize="29" fontWeight="800" fontStyle="italic" fill="#fff" textLength="30" lengthAdjust="spacingAndGlyphs">VS</text>
              </svg>
              <Fit w={168} size={42} weight={500}>多空看盘</Fit>
            </CardTitle>
          </Card>
        </Cards>

        <BottomBar>
          <IndexBox>
            <Caret $w={22} $h={7} $c="#7a7a7a" $up />
            <IndexValue><Fit w={149} size={41} color={RED}>3825.76</Fit></IndexValue>
            <IndexLine><Fit w={71} size={35}>上证</Fit><Fit w={108} size={37} color={RED}>1.45%</Fit></IndexLine>
          </IndexBox>
          <Action>
            <svg width="66" height="60" viewBox="0 0 66 60" fill="none" stroke={GRAY} strokeWidth="3">
              <path d="M17 9A26.500 26.500 0 0 1 57 42M50 51A26.500 26.500 0 0 1 9 18M1 21L10 16.500L13 24M54 38L57.500 43.500L65 40" />
              <path d="M23 17L32.500 29L42 17M32.500 29V45M22 29.500H43M22 37.500H43" />
            </svg>
            交易
          </Action>
          <Action>
            <svg width="58" height="60" viewBox="0 0 58 60" fill="none" stroke={GRAY} strokeWidth="3">
              <path d="M38 4H8Q3 4 3 9V51Q3 56 8 56H49Q54 56 54 51V20" />
              <path d="M42 10L48.500 15.500L28 36L20 39.500L23 31ZM45 7L49 3L54.500 4L54 10L51 13Z" fill={GRAY} stroke="none" />
            </svg>
            发帖
          </Action>
          <Action>
            <svg width="54" height="60" viewBox="0 0 54 60" fill="none" stroke={GRAY} strokeWidth="3.200">
              <rect x="3" y="5.500" width="21" height="21" rx="4" /><rect x="3" y="33" width="21" height="21" rx="4" /><rect x="30" y="33" width="21" height="21" rx="4" />
              <path d="M41 4.500L52 16L41 27.500L30 16Z" strokeLinejoin="round" />
            </svg>
            功能
          </Action>
          <Action $on>
            <svg width="60" height="60" viewBox="0 0 60 60" fill="none" stroke={ORANGE} strokeWidth="3">
              <circle cx="30" cy="31" r="26.500" /><path d="M16 31H44M30 17V45" />
            </svg>
            加自选
          </Action>
        </BottomBar>

        <SystemNav>
          <NavCell>
            <svg width="52" height="48" viewBox="0 0 52 48" stroke="#8c8c8c" strokeWidth="3.800" strokeLinecap="round">
              <path d="M3 8H49M3 25H49M3 42H49" />
            </svg>
          </NavCell>
          <NavCell>
            <svg width="72" height="48" viewBox="0 0 72 48" fill="none" stroke="#8c8c8c" strokeWidth="3.500" strokeLinecap="round" strokeLinejoin="round">
              <path d="M3 22L32 5.500Q36 3 40 5.500L69 22M14.500 27V39Q14.500 44 20 44H53Q57.500 44 57.500 39V27" />
            </svg>
          </NavCell>
          <NavCell>
            <svg width="54" height="48" viewBox="0 0 54 48" fill="none" stroke="#8c8c8c" strokeWidth="3.800" strokeLinecap="round">
              <path d="M4 11H45Q51 11 51 16V37Q51 42 45 42H11" /><path d="M1 12L16 3V12Z" fill="#8c8c8c" stroke="none" />
            </svg>
          </NavCell>
        </SystemNav>
      </Page>
    </>
  );
}
